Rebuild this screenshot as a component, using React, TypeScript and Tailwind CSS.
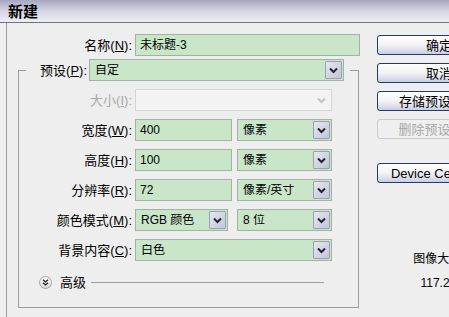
import clsx from 'clsx';

const FONT = "font-['Liberation_Sans','Noto_Sans_CJK_SC',sans-serif]";

function Label({ text, hotkey, disabled, className }: { text: string; hotkey: string; disabled?: boolean; className?: string }) {
  return (
    <span className={clsx('text-right whitespace-nowrap text-[13px]', disabled ? 'text-[#a8a8a8]' : 'text-black', className)}>
      {text}(<u>{hotkey}</u>):
    </span>
  );
}

function Chevron({ disabled }: { disabled?: boolean }) {
  return (
    <svg width="9" height="7" viewBox="0 0 9 7" className="block">
      <path
        d="M1 1.5 L4.5 5 L8 1.5"
        fill="none"
        stroke={disabled ? '#c4c4c4' : '#23233a'}
        strokeWidth="2"
      />
    </svg>
  );
}

function ArrowBox({ disabled }: { disabled?: boolean }) {
  return (
    <div
      className={clsx(
        'w-[17px] h-[18px] shrink-0 flex items-center justify-center border rounded-[1px]',
        disabled
          ? 'border-transparent bg-transparent'
          : 'border-[#9c9db6] bg-gradient-to-br from-[#e6e7f0] to-[#c3c5d8]'
      )}
    >
      <Chevron disabled={disabled} />
    </div>
  );
}

function TextField({ value, className }: { value: string; className?: string }) {
  return (
    <div className={clsx('h-[22px] flex items-center border border-[#a3b3a3] bg-[#c9e6c9] pl-[4px]', className)}>
      {value}
    </div>
  );
}

function Select({ value, className, disabled }: { value: string; className?: string; disabled?: boolean }) {
  return (
    <div
      className={clsx(
        'h-[22px] flex items-center border pl-[5px] pr-[1px]',
        disabled ? 'border-[#d6d6d6] bg-[#f3f3f3]' : 'border-[#a3b3a3] bg-[#c9e6c9]',
        className
      )}
    >
      <span className="flex-1 whitespace-nowrap overflow-hidden">{value}</span>
      <ArrowBox disabled={disabled} />
    </div>
  );
}

function Button({ children, disabled, className }: { children: React.ReactNode; disabled?: boolean; className?: string }) {
  return (
    <div
      className={clsx(
        'h-[20px] w-[124px] flex items-center justify-center rounded-[3px] border whitespace-nowrap',
        disabled
          ? 'border-[#c9c9c9] bg-[#efefef] text-[#a9a9a9]'
          : 'border-[#24386c] bg-gradient-to-b from-white via-[#f3f3f7] to-[#c9cfe2] text-black',
        className
      )}
    >
      {children}
    </div>
  );
}

function AdvancedIcon() {
  return (
    <div className="w-[13px] h-[13px] rounded-full border border-[#a2a2a2] bg-gradient-to-b from-white to-[#d9d9d9] flex items-center justify-center">
      <svg width="7" height="7" viewBox="0 0 7 7">
        <path d="M1 0.8 L3.5 3 L6 0.8 M1 3.8 L3.5 6 L6 3.8" fill="none" stroke="#222" strokeWidth="1.3" />
      </svg>
    </div>
  );
}

export default function App() {
  return (
    <div className={clsx('w-[449px] h-[317px] overflow-hidden bg-[#eeeeee] flex flex-col text-[12px] leading-none', FONT)}>
      {/* Title bar */}
      <div className="h-[23px] shrink-0 flex items-center pl-[8px] border-b border-[#6f6f82] bg-gradient-to-b from-[#a7a7c2] via-[#d4d5e2] to-[#eeeff4]">
        <span className="text-[15px] font-bold text-black">新建</span>
      </div>

      <div className="flex-1 flex pl-[6px]">
        <div className="flex-1 flex border-l border-[#9d9d9d]">
          {/* Form column */}
          <div className="w-[354px] shrink-0 flex flex-col pt-[11px] pl-[11px]">
            <div className="flex items-center gap-[3px]">
              <Label text="名称" hotkey="N" className="w-[114px]" />
              <TextField value="未标题-3" className="w-[225px]" />
            </div>

            <fieldset className="mt-[3px] w-[341px] h-[249px] border border-[#9d9d9d]">
              <legend className="ml-[7px] px-0">
                <div className="flex items-center gap-[2px] pr-[6px]">
                  <Label text="预设" hotkey="P" className="w-[61px]" />
                  <Select value="自定" className="w-[255px]" />
                </div>
              </legend>

              <div className="flex flex-col gap-[8px] pt-[8px]">
                <div className="flex items-center gap-[3px]">
                  <Label text="大小" hotkey="I" disabled className="w-[113px]" />
                  <Select value="" disabled className="w-[197px]" />
                </div>
                <div className="flex items-center gap-[3px]">
                  <Label text="宽度" hotkey="W" className="w-[113px]" />
                  <div className="flex gap-[5px]">
                    <TextField value="400" className="w-[97px]" />
                    <Select value="像素" className="w-[95px]" />
                  </div>
                </div>
                <div className="flex items-center gap-[3px]">
                  <Label text="高度" hotkey="H" className="w-[113px]" />
                  <div className="flex gap-[5px]">
                    <TextField value="100" className="w-[97px]" />
                    <Select value="像素" className="w-[95px]" />
                  </div>
                </div>
                <div className="flex items-center gap-[3px]">
                  <Label text="分辨率" hotkey="R" className="w-[113px]" />
                  <div className="flex gap-[5px]">
                    <TextField value="72" className="w-[97px]" />
                    <Select value="像素/英寸" className="w-[95px]" />
                  </div>
                </div>
                <div className="flex items-center gap-[3px]">
                  <Label text="颜色模式" hotkey="M" className="w-[113px]" />
                  <div className="flex gap-[9px]">
                    <Select value="RGB 颜色" className="w-[93px]" />
                    <Select value="8 位" className="w-[95px]" />
                  </div>
                </div>
                <div className="flex items-center gap-[3px]">
                  <Label text="背景内容" hotkey="C" className="w-[113px]" />
                  <Select value="白色" className="w-[197px]" />
                </div>
              </div>

              {/* Advanced */}
              <div className="mt-[15px] pl-[20px] flex items-center">
                <AdvancedIcon />
                <span className="ml-[8px] text-[13px]">高级</span>
                <div className="ml-[5px] w-[233px] h-px bg-[#9d9d9d]" />
              </div>
            </fieldset>
          </div>

          {/* Buttons column */}
          <div className="flex flex-col pt-[12px] pl-[16px] text-[13px]">
            <div className="flex flex-col gap-[8px]">
              <Button>确定</Button>
              <Button>取消</Button>
              <Button>存储预设(S)...</Button>
              <Button disabled>删除预设(D)...</Button>
            </div>
            <Button className="mt-[24px]">Device Central...</Button>
            <div className="w-[124px] mt-[70px] flex flex-col items-center gap-[12px] text-[12px]">
              <span>图像大小:</span>
              <span>117.2K</span>
            </div>
          </div>
        </div>
      </div>
    </div>
  );
}
